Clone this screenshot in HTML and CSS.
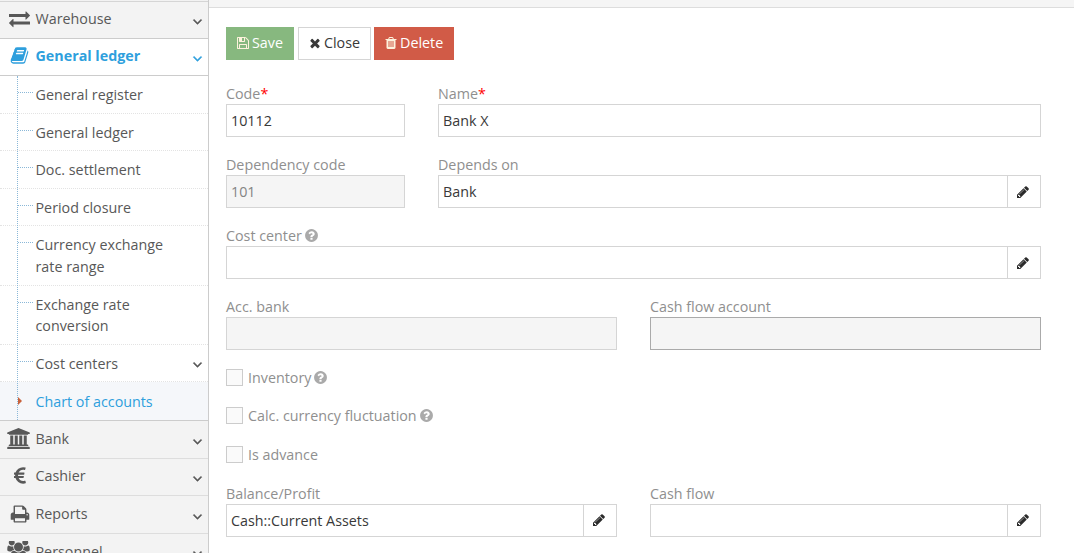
FILE: index.html
```html
<!DOCTYPE html>
<html lang="en">
<head>
<meta charset="utf-8">
<title>Chart of accounts</title>
<link rel="stylesheet" href="styles.css">
</head>
<body>
<svg class="defs" aria-hidden="true">
<symbol id="i-pencil" viewBox="0 0 1792 1792"><path d="M491 1536l91-91-235-235-91 91v107h128v128h107zm523-928q0-22-22-22-10 0-17 7l-542 542q-7 7-7 17 0 22 22 22 10 0 17-7l542-542q7-7 7-17zm-54-192l416 416-832 832h-416v-416zm683 96q0 53-37 90l-166 166-416-416 166-165q36-38 90-38 53 0 91 38l235 234q37 39 37 91z"/></symbol>
<symbol id="i-help" viewBox="0 0 1792 1792"><path d="M1024 1376v-192q0-14-9-23t-23-9h-192q-14 0-23 9t-9 23v192q0 14 9 23t23 9h192q14 0 23-9t9-23zm256-672q0-88-55.500-163t-138.500-116-170-41q-243 0-371 213-15 24 8 42l132 100q7 6 19 6 16 0 25-12 53-68 86-92 34-24 86-24 48 0 85.500 26t37.500 59q0 38-20 61t-68 45q-63 28-115.500 86.500t-52.500 125.500v36q0 14 9 23t23 9h192q14 0 23-9t9-23q0-19 21.500-49.500t54.500-49.500q32-18 49-28.500t46-35 44.500-48 28-60.500 12.500-81zm384 192q0 209-103 385.500t-279.500 279.500-385.500 103-385.500-103-279.500-279.500-103-385.500 103-385.500 279.500-279.500 385.500-103 385.500 103 279.500 279.500 103 385.500z"/></symbol>
<symbol id="i-times" viewBox="0 0 1792 1792"><path d="M1490 1322q0 40-28 68l-136 136q-28 28-68 28t-68-28l-294-294-294 294q-28 28-68 28t-68-28l-136-136q-28-28-28-68t28-68l294-294-294-294q-28-28-28-68t28-68l136-136q28-28 68-28t68 28l294 294 294-294q28-28 68-28t68 28l136 136q28 28 28 68t-28 68l-294 294 294 294q28 28 28 68z"/></symbol>
<symbol id="i-angle" viewBox="0 0 1792 1792"><path d="M1395 736q0 13-10 23l-466 466q-10 10-23 10t-23-10l-466-466q-10-10-10-23t10-23l50-50q10-10 23-10t23 10l393 393 393-393q10-10 23-10t23 10l50 50q10 10 10 23z"/></symbol>
<symbol id="i-exchange" viewBox="0 0 1792 1792"><path d="M1792 1184v192q0 13-9.500 22.500t-22.500 9.500h-1376v192q0 13-9.500 22.500t-22.500 9.500q-12 0-24-10l-319-320q-9-9-9-22 0-14 9-23l320-320q9-9 23-9 13 0 22.500 9.500t9.500 22.500v192h1376q13 0 22.500 9.500t9.500 22.500zm0-544q0 14-9 23l-320 320q-9 9-23 9-13 0-22.500-9.500t-9.500-22.500v-192h-1376q-13 0-22.500-9.500t-9.500-22.500v-192q0-13 9.500-22.500t22.500-9.500h1376v-192q0-14 9-23t23-9q12 0 24 10l319 319q9 9 9 23z"/></symbol>
<symbol id="i-print" viewBox="0 0 1792 1792"><path d="M448 1536h896v-256h-896v256zm0-640h896v-384h-160q-40 0-68-28t-28-68v-160h-640v640zm1152 64q0-26-19-45t-45-19-45 19-19 45 19 45 45 19 45-19 19-45zm128 0v416q0 13-9.500 22.500t-22.500 9.500h-224v160q0 40-28 68t-68 28h-960q-40 0-68-28t-28-68v-160h-224q-13 0-22.500-9.500t-9.500-22.500v-416q0-79 56.500-135.500t135.500-56.500h64v-544q0-40 28-68t68-28h672q40 0 88 20t76 48l152 152q28 28 48 76t20 88v256h64q79 0 135.500 56.500t56.500 135.500z"/></symbol>
<symbol id="i-bank" viewBox="0 0 1920 1792"><path d="M960 0l960 384v128h-128q0 26-20.500 45t-48.500 19h-1526q-28 0-48.500-19t-20.500-45h-128v-128zm-704 640h256v768h128v-768h256v768h128v-768h256v768h128v-768h256v768h59q28 0 48.500 19t20.500 45v64h-1664v-64q0-26 20.500-45t48.500-19h59v-768zm1595 960q28 0 48.500 19t20.500 45v128h-1920v-128q0-26 20.500-45t48.500-19h1782z"/></symbol>
<symbol id="i-book" viewBox="0 0 1792 1792"><path d="M1703 478q40 57 18 129l-275 906q-19 64-76.500 107.500t-122.500 43.500h-923q-77 0-148.500-53.500t-99.500-131.500q-24-67-2-127 0-4 3-27t4-37q1-8-3-21.500t-3-19.500q2-11 8-21t16.500-23.500 16.500-23.500q23-38 45-91.500t30-91.500q3-10 .5-30t-.5-28q3-11 17-28t17-23q21-36 42-92t25-90q1-9-2.500-32t.5-28q4-13 22-30.500t22-22.500q19-26 42.500-84.500t27.500-96.500q1-8-3-25.500t-2-26.500q2-8 9-18t18-23 17-21q8-12 16.500-30.500t15-35 16-36 19.500-32 26.500-23.500 36-11.500 47.500 5.500l-1 3q38-9 51-9h761q74 0 114 56t18 130l-274 906q-36 119-71.500 153.500t-128.500 34.500h-869q-27 0-38 15-11 16-1 43 24 70 144 70h923q29 0 56-15.500t35-41.500l300-987q7-22 5-57 38 15 59 43zm-1064 2q-4 13 2 22.500t20 9.500h608q13 0 25.500-9.500t16.500-22.500l21-64q4-13-2-22.500t-20-9.500h-608q-13 0-25.500 9.500t-16.500 22.500zm-83 256q-4 13 2 22.500t20 9.500h608q13 0 25.500-9.500t16.500-22.500l21-64q4-13-2-22.500t-20-9.500h-608q-13 0-25.500 9.500t-16.500 22.500z"/></symbol>
<symbol id="i-eur" viewBox="0 0 1024 1792"><path d="M976 1277l35 159q3 12-3 22.500t-17 14.500l-5 1q-4 2-10.500 3.500t-16 4.500-21.500 5.500-25.500 5-30 5-33.500 4.500-36.500 3-38.500 1q-234 0-409-130.500t-238-351.500h-95q-13 0-22.500-9.500t-9.500-22.500v-113q0-13 9.500-22.500t22.500-9.500h66q-2-57 1-105h-67q-14 0-23-9t-9-23v-114q0-14 9-23t23-9h98q67-210 243.500-338t400.500-128q102 0 194 23 11 3 20 15 6 11 3 24l-43 159q-3 13-14 19.500t-24 2.500l-4-1q-4-1-11.500-2.500l-17.500-3.500-22.500-3.500-26-3-29-2.500-29.500-1q-126 0-226 64t-150 176h468q16 0 25 12 10 12 7 26l-24 114q-5 26-32 26h-488q-3 47 0 105h459q15 0 25 12 9 12 6 27l-24 112q-2 11-11 18.500t-20 7.500h-387q48 117 149.500 185.500t228.500 68.500q18 0 36-1.500t33.500-3.500 29.500-4.500 24.500-5 18.500-4.500l12-3 5-2q13-5 26 2 12 7 15 21z"/></symbol>
<symbol id="i-save" viewBox="0 0 1792 1792"><path d="M512 1536h768v-384h-768v384zm896 0h128v-896q0-14-10-38.500t-20-34.500l-281-281q-10-10-34-20t-39-10v416q0 40-28 68t-68 28h-576q-40 0-68-28t-28-68v-416h-128v1280h128v-416q0-40 28-68t68-28h832q40 0 68 28t28 68v416zm-384-928v-320q0-13-9.500-22.500t-22.500-9.500h-192q-13 0-22.500 9.500t-9.500 22.500v320q0 13 9.500 22.500t22.500 9.500h192q13 0 22.500-9.500t9.500-22.500zm640 32v928q0 40-28 68t-68 28h-1344q-40 0-68-28t-28-68v-1344q0-40 28-68t68-28h928q40 0 88 20t76 48l280 280q28 28 48 76t20 88z"/></symbol>
<symbol id="i-trash" viewBox="0 0 1792 1792"><path d="M704 1376v-704q0-14-9-23t-23-9h-64q-14 0-23 9t-9 23v704q0 14 9 23t23 9h64q14 0 23-9t9-23zm256 0v-704q0-14-9-23t-23-9h-64q-14 0-23 9t-9 23v704q0 14 9 23t23 9h64q14 0 23-9t9-23zm256 0v-704q0-14-9-23t-23-9h-64q-14 0-23 9t-9 23v704q0 14 9 23t23 9h64q14 0 23-9t9-23zm-544-992h448l-48-117q-7-9-17-11h-317q-10 2-17 11zm928 32v64q0 14-9 23t-23 9h-96v948q0 83-47 143.500t-113 60.500h-832q-66 0-113-58.500t-47-141.500v-952h-96q-14 0-23-9t-9-23v-64q0-14 9-23t23-9h309l70-167q15-37 54-63t79-26h320q40 0 79 26t54 63l70 167h309q14 0 23 9t9 23z"/></symbol>
<symbol id="i-users" viewBox="0 -128 1920 1792"><path d="M593 640q-162 5-265 128h-134q-82 0-138-40.500t-56-118.500q0-353 124-353 6 0 43.500 21t97.500 42.500 119 21.500q67 0 133-23-5 37-5 66 0 139 81 256zm1071 637q0 120-73 189.500t-194 69.500h-874q-121 0-194-69.500t-73-189.500q0-53 3.500-103.500t14-109 26.500-108.500 43-97.500 62-81 85.500-53.500 111.500-20q10 0 43 21.500t73 48 107 48 135 21.500 135-21.500 107-48 73-48 43-21.500q61 0 111.500 20t85.500 53.500 62 81 43 97.500 26.500 108.500 14 109 3.500 103.500zm-1024-1277q0 106-75 181t-181 75-181-75-75-181 75-181 181-75 181 75 75 181zm704 384q0 159-112.500 271.500t-271.500 112.500-271.500-112.500-112.500-271.500 112.500-271.500 271.500-112.500 271.500 112.500 112.500 271.500zm576 225q0 78-56 118.500t-138 40.500h-134q-103-123-265-128 81-117 81-256 0-29-5-66 66 23 133 23 59 0 119-21.500t97.500-42.500 43.500-21q124 0 124 353zm-128-609q0 106-75 181t-181 75-181-75-75-181 75-181 181-75 181 75 75 181z"/></symbol>
</svg>
<div class="app">
  <nav class="sidebar">
    <ul class="nav">
      <li class="nav-item"><a class="nav-link"><span class="nav-icon"><svg class="ic ic-exchange"><use href="#i-exchange"/></svg></span><span class="nav-text">Warehouse</span><svg class="angle"><use href="#i-angle"/></svg></a></li>
      <li class="nav-item open">
        <a class="nav-link"><span class="nav-icon"><svg class="ic ic-book"><use href="#i-book"/></svg></span><span class="nav-text">General ledger</span><svg class="angle"><use href="#i-angle"/></svg></a>
        <ul class="subnav">
          <li class="sub-item"><a class="sub-link">General register</a></li>
          <li class="sub-item"><a class="sub-link">General ledger</a></li>
          <li class="sub-item"><a class="sub-link">Doc. settlement</a></li>
          <li class="sub-item"><a class="sub-link">Period closure</a></li>
          <li class="sub-item"><a class="sub-link">Currency exchange<br>rate range</a></li>
          <li class="sub-item"><a class="sub-link">Exchange rate<br>conversion</a></li>
          <li class="sub-item"><a class="sub-link">Cost centers</a><svg class="angle"><use href="#i-angle"/></svg></li>
          <li class="sub-item active"><a class="sub-link">Chart of accounts</a></li>
        </ul>
      </li>
      <li class="nav-item"><a class="nav-link"><span class="nav-icon"><svg class="ic ic-bank"><use href="#i-bank"/></svg></span><span class="nav-text">Bank</span><svg class="angle"><use href="#i-angle"/></svg></a></li>
      <li class="nav-item"><a class="nav-link"><span class="nav-icon"><svg class="ic ic-eur"><use href="#i-eur"/></svg></span><span class="nav-text">Cashier</span><svg class="angle"><use href="#i-angle"/></svg></a></li>
      <li class="nav-item"><a class="nav-link"><span class="nav-icon"><svg class="ic ic-print"><use href="#i-print"/></svg></span><span class="nav-text">Reports</span><svg class="angle"><use href="#i-angle"/></svg></a></li>
      <li class="nav-item"><a class="nav-link"><span class="nav-icon"><svg class="ic ic-users"><use href="#i-users"/></svg></span><span class="nav-text">Personnel</span><svg class="angle"><use href="#i-angle"/></svg></a></li>
    </ul>
  </nav>
  <main class="main">
    <div class="topbar"></div>
    <div class="content">
      <div class="toolbar">
        <button class="btn btn-save" type="button"><svg class="btn-ic"><use href="#i-save"/></svg>Save</button>
        <button class="btn btn-close" type="button"><svg class="btn-ic"><use href="#i-times"/></svg>Close</button>
        <button class="btn btn-delete" type="button"><svg class="btn-ic"><use href="#i-trash"/></svg>Delete</button>
      </div>
      <form class="form">
        <div class="field span-3"><label class="label">Code<span class="req">*</span></label><input class="input" value="10112"></div>
        <div class="field span-9"><label class="label">Name<span class="req">*</span></label><input class="input" value="Bank X"></div>

        <div class="field span-3"><label class="label">Dependency code</label><input class="input" value="101" disabled></div>
        <div class="field span-9"><label class="label">Depends on</label><div class="group"><input class="input" value="Bank"><span class="addon"><svg class="pencil"><use href="#i-pencil"/></svg></span></div></div>

        <div class="field span-12"><label class="label">Cost center<svg class="help help-label"><use href="#i-help"/></svg></label><div class="group"><input class="input" value=""><span class="addon"><svg class="pencil"><use href="#i-pencil"/></svg></span></div></div>

        <div class="field span-6"><label class="label">Acc. bank</label><input class="input" value="" disabled></div>
        <div class="field span-6"><label class="label">Cash flow account</label><input class="input input-dark" value="" disabled></div>

        <div class="checks span-12">
          <div class="check"><span class="box"></span><span class="check-text">Inventory</span><svg class="help"><use href="#i-help"/></svg></div>
          <div class="check"><span class="box"></span><span class="check-text">Calc. currency fluctuation</span><svg class="help"><use href="#i-help"/></svg></div>
          <div class="check"><span class="box"></span><span class="check-text">Is advance</span></div>
        </div>

        <div class="field span-6"><label class="label">Balance/Profit</label><div class="group"><input class="input" value="Cash::Current Assets"><span class="addon"><svg class="pencil"><use href="#i-pencil"/></svg></span></div></div>
        <div class="field span-6"><label class="label">Cash flow</label><div class="group"><input class="input" value=""><span class="addon"><svg class="pencil"><use href="#i-pencil"/></svg></span></div></div>
      </form>
    </div>
  </main>
</div>
</body>
</html>
```

FILE: styles.css
```css
* { box-sizing: border-box; }
html, body { margin: 0; height: 100%; overflow: hidden; background: #fff; }
body { font-family: "Open Sans", sans-serif; font-size: 14.3px; color: #393939; }
.defs { display: none; }
.app { display: flex; height: 553px; overflow: hidden; }

/* Sidebar */
.sidebar { width: 209px; flex: none; border-right: 1px solid #ccc; background: #f2f2f2; overflow: hidden; padding-top: 0.8px; }
.nav, .subnav { list-style: none; margin: 0; padding: 0; }
.nav-item { background: #f3f3f3; }
.nav-link { display: flex; align-items: center; height: 37.6px; padding-bottom: 1.4px; border-top: 1px solid #ddd; color: #585858; line-height: 21.6px; }
.nav-item:first-child > .nav-link { border-top-color: #d5d5d5; padding-bottom: 2.6px; }
.nav-icon { width: 35.5px; flex: none; display: flex; justify-content: center; padding-left: 3px; }
.nav-text { flex: 1; }
.ic { display: block; fill: #585858; }
.ic-exchange { width: 21px; height: 21px; margin-left: 1px; }
.ic-book { width: 19px; height: 19px; fill: #2e9fdd; margin-left: 1px; }
.ic-bank { width: 23px; height: 21px; margin-left: -1px; }
.ic-eur { width: 12px; height: 21px; margin-left: 2px; }
.ic-print { width: 20px; height: 20px; margin-left: 2px; }
.ic-users { width: 23px; height: 21px; margin-left: -1px; }
.angle { width: 15px; height: 15px; fill: #555; stroke: #555; stroke-width: 70; flex: none; margin: 5px 3px 0 0; }

.open > .nav-link { background: #fff; color: #2e9fdd; font-weight: 700; border-bottom: 1px solid #ccc; border-top-color: #ccc; padding-bottom: 2.6px; }
.open > .nav-link .angle { fill: #2e9fdd; stroke: #2e9fdd; }
.subnav { background: #fff; position: relative; }
.subnav::before { content: ""; position: absolute; left: 17px; top: 0; bottom: 0; border-left: 1px dotted #8bb8d8; z-index: 1; }
.sub-item { position: relative; display: flex; align-items: center; padding: 8px 3px 7px 35.5px; border-bottom: 1px dotted #e3e3e3; line-height: 21.6px; color: #585858; }
.sub-item:last-child { border-bottom-color: transparent; }
.sub-item::before { content: ""; position: absolute; left: 18px; top: 16px; width: 15px; border-top: 1px dotted #8bb8d8; }
.sub-link { flex: 1; }
.sub-item .angle { margin-right: 0; margin-top: 2px; }
.sub-item.active { background: #f5f7fa; color: #2e9fdd; padding-top: 9px; padding-bottom: 6px; }
.active::before { width: 4px; height: 0; border-top: 4px solid transparent; border-bottom: 4px solid transparent; border-left: 4px solid #c8613a; top: 15px; z-index: 2; }

.nav-item.open + .nav-item > .nav-link { border-top-color: #ccc; }

/* Main */
.main { flex: 1; min-width: 0; }
.topbar { height: 8px; background: #f5f5f5; border-bottom: 1px solid #ddd; }
.content { padding: 19px 33px 0 17px; }
.toolbar { display: flex; gap: 3px; height: 33px; }
.btn { display: flex; align-items: center; height: 33px; padding: 0 10px 2px 9px; border: 1px solid; font: inherit; cursor: pointer; }
.btn-ic { width: 14px; height: 14px; margin-right: 2px; fill: currentColor; }
.btn-save { background: #87b87f; border-color: #87b87f; color: #fff; margin-right: 1px; }
.btn-close { background: #fff; border-color: #d5d5d5; color: #393939; }
.btn-delete { background: #d15b47; border-color: #d15b47; color: #fff; }
.btn-save .btn-ic, .btn-delete .btn-ic { fill: #fdf2dc; }

.form { display: grid; grid-template-columns: repeat(12, minmax(0, 1fr)); column-gap: 33px; row-gap: 17px; margin-top: 23px; }
.field { min-width: 0; }
.span-3 { grid-column: span 3; }
.span-6 { grid-column: span 6; }
.span-9 { grid-column: span 9; }
.span-12 { grid-column: span 12; }
.label { display: block; height: 21px; line-height: 21px; color: #8f8f8f; white-space: nowrap; }
.req { color: #f00; }
.help { width: 15px; height: 15px; fill: #aaa; vertical-align: -2px; flex: none; }
.help-label { margin-left: 2px; }
.input { display: block; width: 100%; height: 33px; padding: 0 4px; border: 1px solid #d5d5d5; border-radius: 0; background: #fff; font: inherit; color: #393939; outline: 0; }
.input:disabled { background: #f5f5f5; color: #848484; opacity: 1; }
.input-dark { border-color: #aaa; }
.group { display: flex; }
.group .input { flex: 1; min-width: 0; }
.addon { flex: none; width: 34px; height: 33px; margin-left: -1px; padding-right: 2px; display: flex; align-items: center; justify-content: center; border: 1px solid #d5d5d5; }
.pencil { width: 14px; height: 14px; fill: #2b2b2b; }

.checks { display: flex; flex-direction: column; gap: 21px; margin-top: 1.500px; margin-bottom: 2.700px; }
.check { display: flex; align-items: center; height: 17.500px; color: #8f8f8f; }
.box { width: 17px; height: 17px; flex: none; border: 1px solid #ccc; background: #fafafa; margin-right: 5px; }
.check-text { margin-right: 2px; }
```
